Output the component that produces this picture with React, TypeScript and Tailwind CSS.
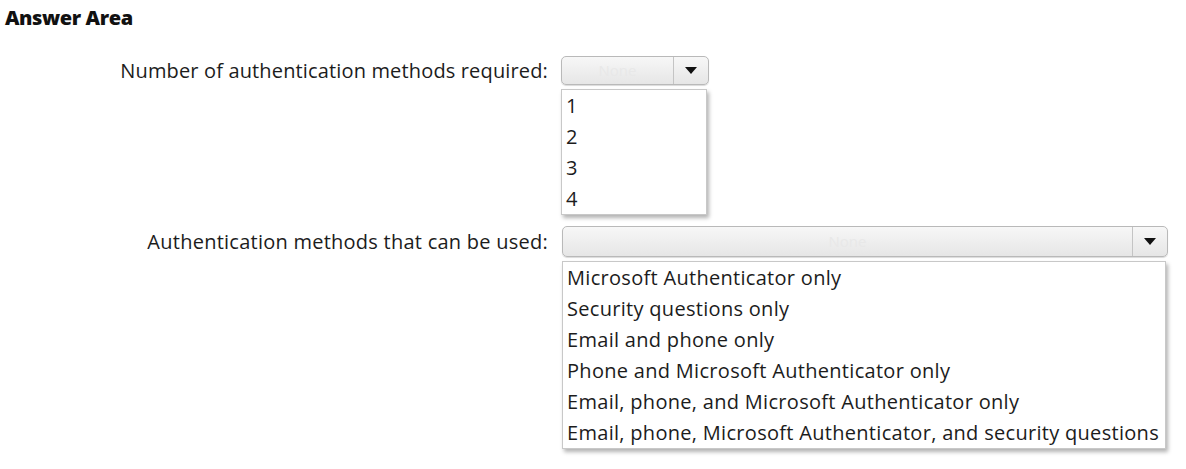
import React from "react";

type DropdownProps = {
  options: string[];
  width: string;
  listWidth: string;
  buttonHeight: string;
};

function Dropdown({ options, width, listWidth, buttonHeight }: DropdownProps) {
  return (
    <div className="flex flex-col">
      <div
        className={`flex ${width} ${buttonHeight} rounded-[5px] border border-[#b9b9b9] bg-gradient-to-b from-[#f7f7f7] to-[#e6e6e6] shadow-[0_1px_1px_rgba(0,0,0,0.15)]`}
      >
        <div className="flex-1 flex items-center justify-center text-[15px] text-[#e8e8e8]">
          None
        </div>
        <div className="w-[35px] border-l border-[#c4c4c4] flex items-center justify-center">
          <svg width="12" height="8" viewBox="0 0 12 8">
            <path d="M0 0 H12 L6 7 Z" fill="#111" />
          </svg>
        </div>
      </div>
      <ul
        className={`mt-[4px] ${listWidth} border border-[#c8c8c8] bg-white shadow-[2px_3px_4px_rgba(0,0,0,0.3)]`}
      >
        {options.map((option) => (
          <li
            key={option}
            className="pl-[4px] leading-[31px] text-[20px] tracking-[0.3px] text-[#1c1c1c]"
          >
            {option}
          </li>
        ))}
      </ul>
    </div>
  );
}

export default function App() {
  return (
    <div
      className="w-[1186px] h-[469px] bg-white"
      style={{ fontFamily: '"Open Sans", "Noto Sans", sans-serif' }}
    >
      <div className="pl-[5px] pt-[6px] leading-[24px] text-[20px] font-extrabold text-[#111] tracking-[-0.4px]">
        Answer Area
      </div>
      <div className="grid grid-cols-[548px_1fr] gap-x-[13px] mt-[26px]">
        <div className="h-[29px] flex items-center justify-end text-[20px] tracking-[0.15px] text-[#1c1c1c]">
          Number of authentication methods required:
        </div>
        <Dropdown
          options={["1", "2", "3", "4"]}
          width="w-[148px]"
          listWidth="w-[146px]"
          buttonHeight="h-[29px]"
        />
        <div className="mt-[11px] h-[31px] flex items-center justify-end text-[20px] tracking-[0.25px] text-[#1c1c1c]">
          Authentication methods that can be used:
        </div>
        <div className="mt-[11px] pl-[1px]">
          <Dropdown
            options={[
              "Microsoft Authenticator only",
              "Security questions only",
              "Email and phone only",
              "Phone and Microsoft Authenticator only",
              "Email, phone, and Microsoft Authenticator only",
              "Email, phone, Microsoft Authenticator, and security questions",
            ]}
            width="w-[606px]"
            listWidth="w-[604px]"
            buttonHeight="h-[31px]"
          />
        </div>
      </div>
    </div>
  );
}
